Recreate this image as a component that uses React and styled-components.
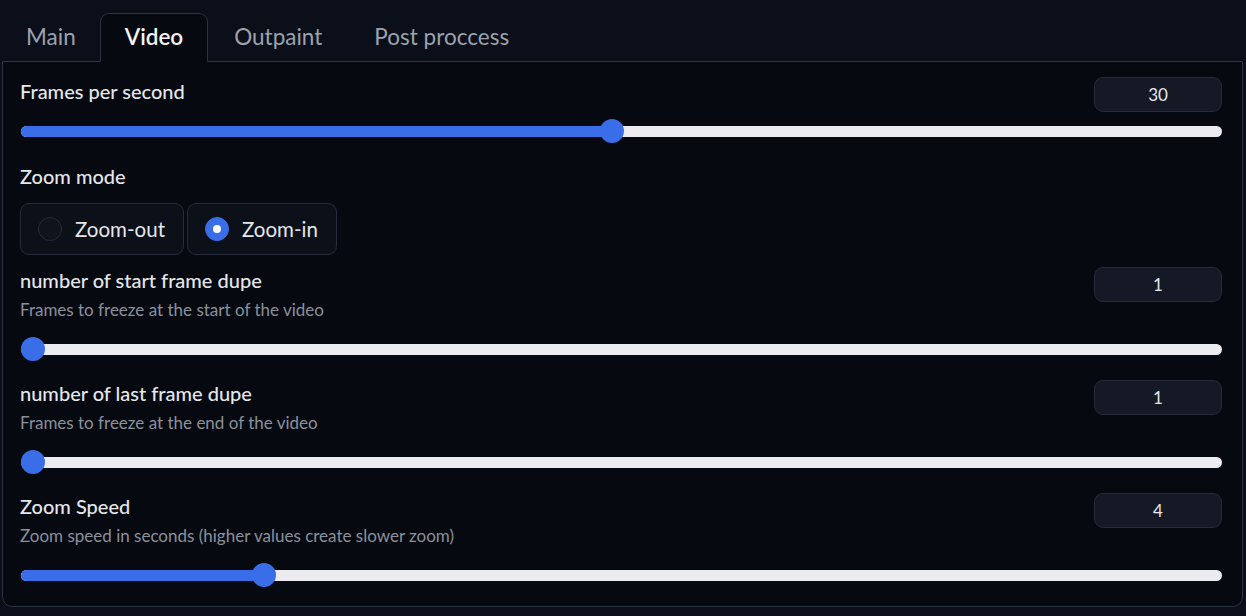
import React from "react";
import styled, { createGlobalStyle } from "styled-components";

const GlobalStyle = createGlobalStyle`
  html, body {
    margin: 0;
    padding: 0;
    background: #0b0f19;
    font-family: Lato, "Source Sans Pro", "Open Sans", sans-serif;
    color: #e5e7eb;
  }
`;

const Page = styled.div`
  width: 1246px;
  height: 616px;
  padding: 13px 3px 0 2px;
  box-sizing: border-box;
`;

const TabBar = styled.div`
  display: flex;
  height: 48px;
  position: relative;
  z-index: 1;
`;

const Tab = styled.div`
  display: flex;
  align-items: center;
  padding: 0 ${(p) => p.$px || 25}px 2px;
  font-size: 22.5px;
  color: ${(p) => (p.$active ? "#f3f4f6" : "#9ca3af")};
  font-weight: ${(p) => (p.$active ? 600 : 400)};
  background: ${(p) => (p.$active ? "#060910" : "transparent")};
  border: 1px solid ${(p) => (p.$active ? "#2c3342" : "transparent")};
  border-bottom: 1px solid ${(p) => (p.$active ? "#060910" : "transparent")};
  border-radius: 9px 9px 0 0;
  box-sizing: border-box;
  height: 49px;
`;

const Panel = styled.div`
  border: 1px solid #2c3342;
  border-radius: 0 0 10px 10px;
  background: #060910;
  height: 546px;
  box-sizing: border-box;
  padding: 15px 20px 0 17px;
  display: flex;
  flex-direction: column;
`;

const Block = styled.div`
  margin-top: ${(p) => p.$mt || 0}px;
  display: flex;
  flex-direction: column;
`;

const Header = styled.div`
  display: flex;
  justify-content: space-between;
  align-items: flex-start;
`;

const LabelCol = styled.div`
  display: flex;
  flex-direction: column;
  padding-top: ${(p) => p.$pt || 0}px;
`;

const Label = styled.div`
  font-size: 20px;
  line-height: 26px;
  color: #e5e7eb;
  font-weight: 500;
`;

const Info = styled.div`
  font-size: 17px;
  line-height: 22px;
  margin-top: 6px;
  margin-bottom: 9px;
  color: #8b919c;
`;

const NumberBox = styled.div`
  width: 128px;
  height: 35px;
  box-sizing: border-box;
  background: #141925;
  border: 1px solid #252b38;
  border-radius: 9px;
  display: flex;
  align-items: center;
  justify-content: center;
  font-size: 17px;
  color: #e5e7eb;
`;

const SliderWrap = styled.div`
  position: relative;
  height: 24px;
  margin-top: 7px;
  margin-left: 1px;
`;

const Track = styled.div`
  position: absolute;
  left: 0;
  right: 0;
  top: 7px;
  height: 11px;
  border-radius: 6px;
  background: #ececf0;
  overflow: hidden;
`;

const Fill = styled.div`
  height: 100%;
  background: #3a6ee8;
`;

const Thumb = styled.div`
  position: absolute;
  top: 0;
  width: 24px;
  height: 24px;
  margin-left: -12px;
  border-radius: 50%;
  background: #3a6ee8;
`;

const RadioGroup = styled.div`
  display: flex;
  gap: 3px;
  margin-top: 14px;
`;

const RadioOption = styled.div`
  display: flex;
  align-items: center;
  gap: 13px;
  height: 52px;
  box-sizing: border-box;
  padding: 0 18px 0 17px;
  background: #0c1019;
  border: 1px solid #262c39;
  border-radius: 9px;
  font-size: 20.5px;
  color: #e5e7eb;
`;

const RadioDot = styled.span`
  width: 24px;
  height: 24px;
  border-radius: 50%;
  box-sizing: border-box;
  display: flex;
  align-items: center;
  justify-content: center;
  background: ${(p) => (p.$on ? "#3a6ee8" : "#0f131c")};
  border: 1px solid ${(p) => (p.$on ? "#3a6ee8" : "#262c39")};
  &::after {
    content: "";
    display: ${(p) => (p.$on ? "block" : "none")};
    width: 8px;
    height: 8px;
    border-radius: 50%;
    background: #ffffff;
  }
`;

function Slider({ value, min, max }) {
  const pct = (value - min) / (max - min);
  const left = `calc(12px + ${pct} * (100% - 24px))`;
  return (
    <SliderWrap>
      <Track>
        <Fill style={{ width: left }} />
      </Track>
      <Thumb style={{ left }} />
    </SliderWrap>
  );
}

function SliderField({ label, info, value, min, max, mt }) {
  return (
    <Block $mt={mt}>
      <Header>
        <LabelCol $pt={info ? 0 : 1}>
          <Label>{label}</Label>
          {info && <Info>{info}</Info>}
        </LabelCol>
        <NumberBox>{value}</NumberBox>
      </Header>
      <Slider value={value} min={min} max={max} />
    </Block>
  );
}

export default function App() {
  return (
    <Page>
      <GlobalStyle />
      <TabBar>
        <Tab $px={23}>Main</Tab>
        <Tab $active $px={24}>Video</Tab>
        <Tab $px={25}>Outpaint</Tab>
        <Tab $px={25}>Post proccess</Tab>
      </TabBar>
      <Panel>
        <SliderField label="Frames per second" value={30} min={1} max={60} />
        <Block $mt={20}>
          <Label>Zoom mode</Label>
          <RadioGroup>
            <RadioOption>
              <RadioDot />
              Zoom-out
            </RadioOption>
            <RadioOption>
              <RadioDot $on />
              Zoom-in
            </RadioOption>
          </RadioGroup>
        </Block>
        <SliderField
          mt={12}
          label="number of start frame dupe"
          info="Frames to freeze at the start of the video"
          value={1}
          min={1}
          max={60}
        />
        <SliderField
          mt={19}
          label="number of last frame dupe"
          info="Frames to freeze at the end of the video"
          value={1}
          min={1}
          max={60}
        />
        <SliderField
          mt={19}
          label="Zoom Speed"
          info="Zoom speed in seconds (higher values create slower zoom)"
          value={4}
          min={0.1}
          max={20}
        />
      </Panel>
    </Page>
  );
}
